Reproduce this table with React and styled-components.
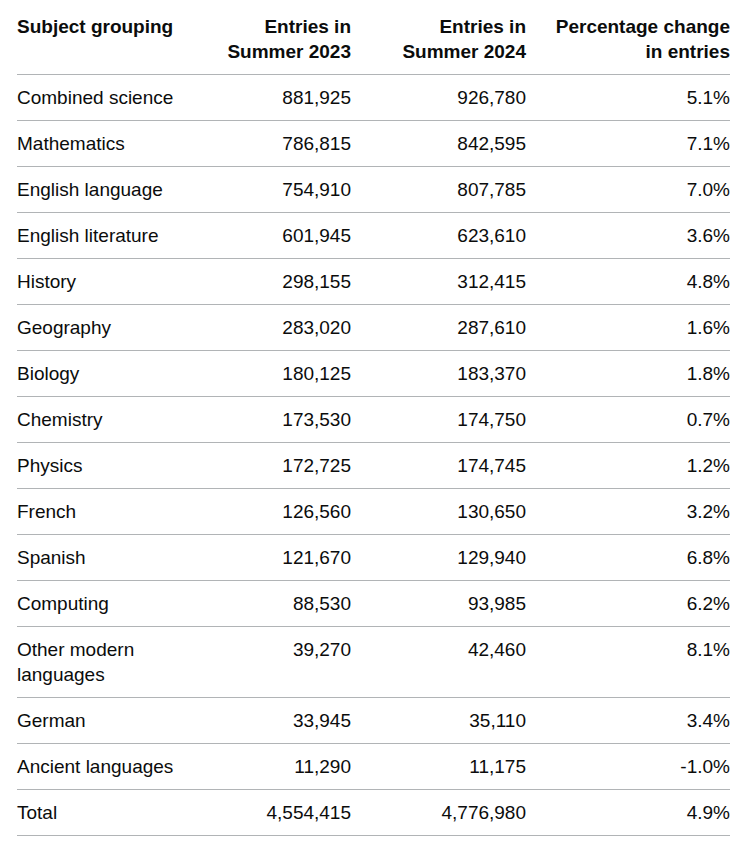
import React from 'react'
import styled, { createGlobalStyle } from 'styled-components';

const rows = [
  ['Combined science', '881,925', '926,780', '5.1%'],
  ['Mathematics', '786,815', '842,595', '7.1%'],
  ['English language', '754,910', '807,785', '7.0%'],
  ['English literature', '601,945', '623,610', '3.6%'],
  ['History', '298,155', '312,415', '4.8%'],
  ['Geography', '283,020', '287,610', '1.6%'],
  ['Biology', '180,125', '183,370', '1.8%'],
  ['Chemistry', '173,530', '174,750', '0.7%'],
  ['Physics', '172,725', '174,745', '1.2%'],
  ['French', '126,560', '130,650', '3.2%'],
  ['Spanish', '121,670', '129,940', '6.8%'],
  ['Computing', '88,530', '93,985', '6.2%'],
  ['Other modern languages', '39,270', '42,460', '8.1%'],
  ['German', '33,945', '35,110', '3.4%'],
  ['Ancient languages', '11,290', '11,175', '-1.0%'],
  ['Total', '4,554,415', '4,776,980', '4.9%'],
];

function App() {
  return (
    <>
      <GlobalStyle />
      <Wrapper>
        <Table>
          <colgroup>
            <col style={{ width: 179 }} />
            <col style={{ width: 175 }} />
            <col style={{ width: 175 }} />
            <col style={{ width: 184 }} />
          </colgroup>
          <thead>
            <tr>
              <Th>Subject grouping</Th>
              <Th numeric>Entries in Summer 2023</Th>
              <Th numeric>Entries in Summer 2024</Th>
              <Th numeric>Percentage change in entries</Th>
            </tr>
          </thead>
          <tbody>
            {rows.map((row) => (
              <tr key={row[0]}>
                <Td>{row[0]}</Td>
                <Td numeric>{row[1]}</Td>
                <Td numeric>{row[2]}</Td>
                <Td numeric>{row[3]}</Td>
              </tr>
            ))}
          </tbody>
        </Table>
      </Wrapper>
    </>
  )
}

const GlobalStyle = createGlobalStyle`
 body{
  margin: 0;
  background: #ffffff;
  color: #0b0c0c;
  font-family: "Liberation Sans", Arial, sans-serif;
 }
`;

const Wrapper = styled.div`
 padding: 4px 23px 0 17px;
`;

const Table = styled.table`
 width: 713px;
 border-collapse: collapse;
 border-spacing: 0;
 table-layout: fixed;
 font-size: 19px;
 line-height: 25px;
`;

const Th = styled.th`
 padding: 10px 20px 10px 0;
 border-bottom: 1px solid #b1b4b6;
 font-weight: 700;
 text-align: ${(p) => (p.numeric ? 'right' : 'left')};
 vertical-align: top;
 &:last-child{
  padding-right: 0;
 }
`;

const Td = styled.td`
 padding: 10px 20px 10px 0;
 border-bottom: 1px solid #b1b4b6;
 font-weight: 400;
 text-align: ${(p) => (p.numeric ? 'right' : 'left')};
 vertical-align: top;
 &:last-child{
  padding-right: 0;
 }
`;

export default App
